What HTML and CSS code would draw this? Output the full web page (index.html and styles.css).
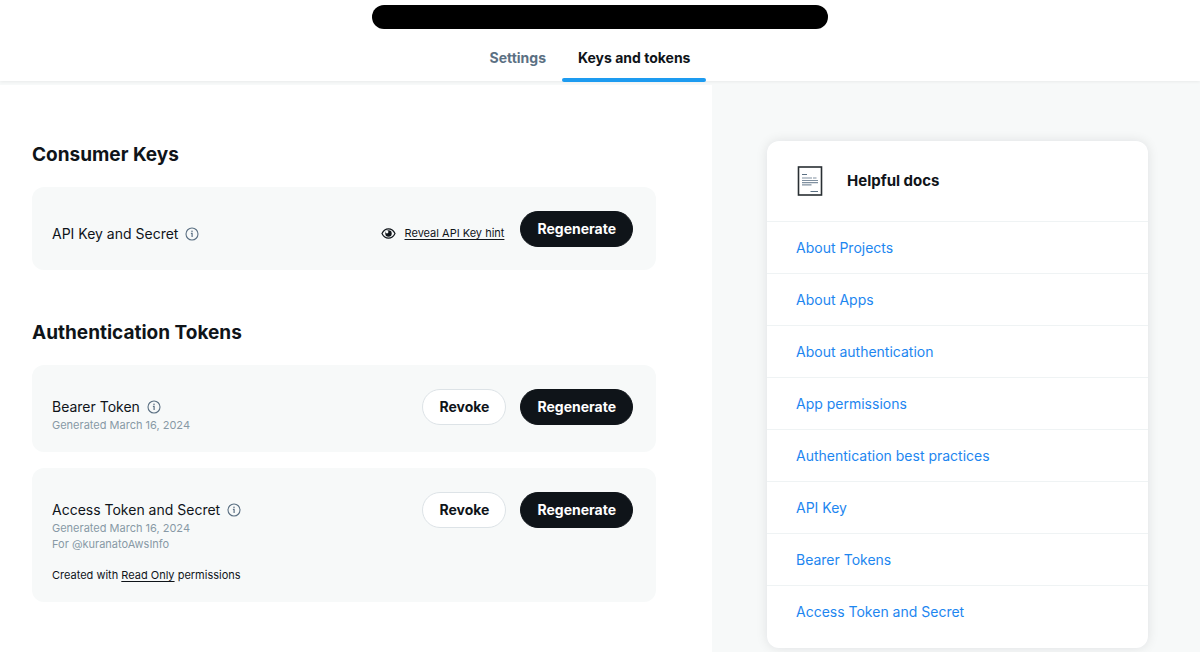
FILE: index.html
```html
<!DOCTYPE html>
<html lang="en">
<head>
<meta charset="utf-8">
<meta name="viewport" content="width=device-width, initial-scale=1">
<title>Keys and tokens</title>
<link rel="stylesheet" href="styles.css">
</head>
<body>
<svg class="sprite" aria-hidden="true">
  <symbol id="info" viewBox="0 0 14 14">
    <circle cx="7" cy="7" r="6" fill="none" stroke="currentColor" stroke-width="1.1"/>
    <circle cx="7" cy="4.2" r="0.8" fill="currentColor"/>
    <path d="M5.9 6.3H7.1V10" fill="none" stroke="currentColor" stroke-width="1.2"/>
  </symbol>
</svg>
<header class="topbar">
  <div class="app-name"></div>
  <nav class="tabs" aria-label="App sections">
    <a class="tab" href="#settings">Settings</a>
    <a class="tab tab-active" href="#keys" aria-current="page">Keys and tokens</a>
  </nav>
</header>
<div class="layout">
  <main class="content">
    <section class="group">
      <h2 class="group-title">Consumer Keys</h2>
      <div class="card">
        <div class="card-info card-info-single">
          <h3 class="card-title">API Key and Secret
            <svg class="info-icon" role="img" aria-label="Info"><use href="#info"/></svg>
          </h3>
        </div>
        <a class="hint" href="#hint">
          <svg class="eye" viewBox="0 0 15 13" aria-hidden="true">
            <path d="M1 6.500C2.400 3.600 4.700 1.800 7.500 1.800S12.600 3.600 14 6.500C12.600 9.400 10.300 11.200 7.500 11.200S2.400 9.400 1 6.500Z" fill="none" stroke="currentColor" stroke-width="1.2"/>
            <circle cx="7.500" cy="6.500" r="3.200" fill="currentColor"/>
            <circle cx="6" cy="5" r="1.400" fill="#f7f9f9"/>
          </svg>
          <span class="underlined">Reveal API Key hint</span>
        </a>
        <div class="actions"><button class="btn btn-dark" type="button">Regenerate</button></div>
      </div>
    </section>
    <section class="group">
      <h2 class="group-title">Authentication Tokens</h2>
      <div class="card">
        <div class="card-info">
          <h3 class="card-title">Bearer Token
            <svg class="info-icon" role="img" aria-label="Info"><use href="#info"/></svg>
          </h3>
          <p class="meta">Generated March 16, 2024</p>
        </div>
        <div class="actions">
          <button class="btn" type="button">Revoke</button>
          <button class="btn btn-dark" type="button">Regenerate</button>
        </div>
      </div>
      <div class="card">
        <div class="card-info">
          <h3 class="card-title">Access Token and Secret
            <svg class="info-icon" role="img" aria-label="Info"><use href="#info"/></svg>
          </h3>
          <p class="meta">Generated March 16, 2024</p>
          <p class="meta">For @kuranatoAwsInfo</p>
          <p class="created">Created with <a class="underlined" href="#permissions">Read Only</a> permissions</p>
        </div>
        <div class="actions">
          <button class="btn" type="button">Revoke</button>
          <button class="btn btn-dark" type="button">Regenerate</button>
        </div>
      </div>
    </section>
  </main>
  <aside class="side">
    <section class="docs">
      <div class="docs-head">
        <svg class="doc-icon" viewBox="0 0 26 30" aria-hidden="true">
          <rect x="1.5" y="1" width="23" height="28" fill="#fff" stroke="#292f33" stroke-width="1.6"/>
          <path d="M5 8.500H10" stroke="#5b7083"/>
          <path d="M5 12H15M16 12H19.500M5 14.500H21M5 16.700H21M5 18.800H14.500" stroke="#8090a0" stroke-width="1.2"/>
          <path d="M13.500 25.500H21" stroke="#5b7083"/>
        </svg>
        <h2 class="docs-title">Helpful docs</h2>
      </div>
      <ul class="docs-list">
        <li><a href="#projects">About Projects</a></li>
        <li><a href="#apps">About Apps</a></li>
        <li><a href="#authentication">About authentication</a></li>
        <li><a href="#app-permissions">App permissions</a></li>
        <li><a href="#best-practices">Authentication best practices</a></li>
        <li><a href="#api-key">API Key</a></li>
        <li><a href="#bearer">Bearer Tokens</a></li>
        <li><a href="#access">Access Token and Secret</a></li>
      </ul>
    </section>
  </aside>
</div>
</body>
</html>
```

FILE: styles.css
```css
* { box-sizing: border-box; }
html, body { margin: 0; }
body {
  display: flex;
  flex-direction: column;
  min-height: 100vh;
  background: #f7f9f9;
  color: #0f1419;
  font-family: Inter, "Liberation Sans", sans-serif;
  font-size: 14px;
}
h2, h3, p, ul { margin: 0; padding: 0; }
a { color: inherit; }
.sprite { position: absolute; width: 0; height: 0; }

.topbar {
  display: flex;
  flex-direction: column;
  align-items: center;
  padding-top: 5px;
  background: #fff;
  box-shadow: 0 1px 3px rgba(15, 20, 25, 0.06);
}
.app-name {
  width: 38%;
  height: 24px;
  border-radius: 12px;
  background: #000;
}
.tabs { display: flex; margin-right: 20px; height: 52px; }
.tab {
  padding: 17px 16px 0;
  color: #5b7083;
  font-weight: 700;
  line-height: 24px;
  text-decoration: none;
}
.tab-active { position: relative; color: #0f1419; }
.tab-active::after {
  content: "";
  position: absolute;
  left: 0;
  right: 0;
  bottom: -1px;
  height: 4px;
  border-radius: 2px;
  background: #1d9bf0;
}

.layout {
  flex: 1;
  display: grid;
  grid-template-columns: 712fr 488fr;
}
.content {
  display: flex;
  flex-direction: column;
  gap: 49px;
  margin-top: 4px;
  padding: 56px 56px 48px 32px;
  background: #fff;
}
.group { display: flex; flex-direction: column; gap: 16px; }
.group-title {
  margin-bottom: 2px;
  font-size: 19px;
  font-weight: 700;
  line-height: 28px;
}
.card {
  display: flex;
  padding: 24px 23px 19px 20px;
  border-radius: 12px;
  background: #f7f9f9;
}
.card-info { flex: 1; padding-top: 8px; }
.card-info-single { padding-top: 13px; padding-bottom: 7px; }
.card-title {
  display: flex;
  align-items: center;
  gap: 7px;
  font-size: 14px;
  font-weight: 400;
  line-height: 20px;
}
.info-icon { width: 14px; height: 14px; color: #5b7083; }
.meta { color: #8899a6; font-size: 11px; line-height: 16px; }
.created { margin-top: 15px; font-size: 11px; line-height: 16px; }
.hint {
  display: flex;
  align-items: center;
  gap: 9px;
  height: 20px;
  margin: 12px 16px 0 0;
  font-size: 11px;
  text-decoration: none;
}
.eye { width: 15px; height: 13px; }
.underlined { text-decoration: underline; text-underline-offset: 2px; }
.actions { display: flex; align-items: flex-start; gap: 14px; }
.btn {
  height: 36px;
  padding: 0 16px;
  border: 1px solid #dde3e7;
  border-radius: 18px;
  background: #fff;
  color: #0f1419;
  font: 700 14px/20px Inter, "Liberation Sans", sans-serif;
}
.btn-dark { border-color: #0f1419; background: #0f1419; color: #fff; }

.side { padding: 60px 52px 4px 55px; }
.docs {
  padding-bottom: 11px;
  border-radius: 12px;
  background: #fff;
  box-shadow: 0 0 12px rgba(15, 20, 25, 0.1);
}
.docs-head {
  display: flex;
  align-items: center;
  gap: 24px;
  height: 80px;
  padding-left: 30px;
}
.doc-icon { width: 26px; height: 30px; }
.docs-title { font-size: 15px; font-weight: 700; line-height: 20px; }
.docs-list { list-style: none; }
.docs-list a {
  display: block;
  padding: 16px 29px 15px;
  border-top: 1px solid #eff3f4;
  color: #1d86f0;
  line-height: 20px;
  text-decoration: none;
}
```
